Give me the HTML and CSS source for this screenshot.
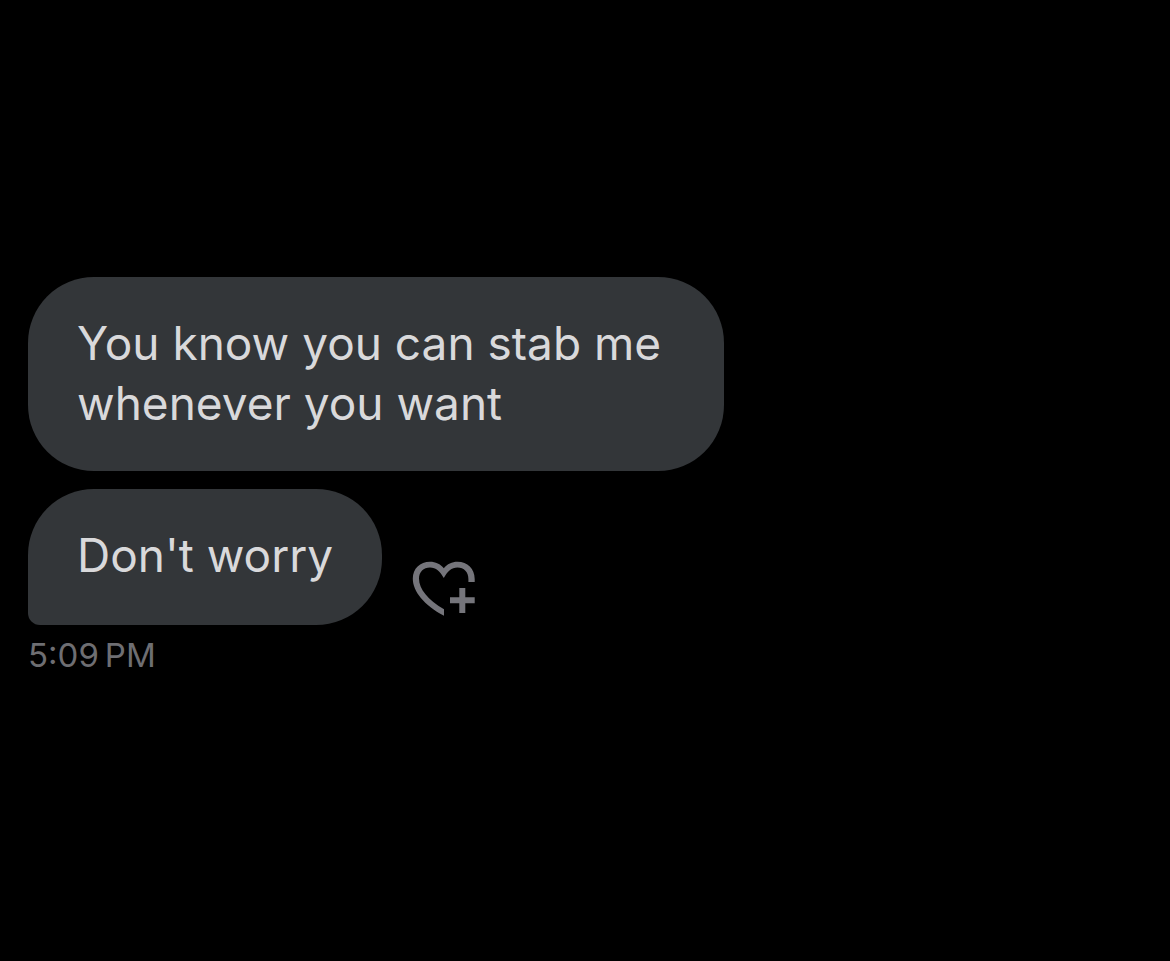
FILE: index.html
```
<!DOCTYPE html>
<html lang="en">
<head>
<meta charset="UTF-8">
<title>Messages</title>
<link rel="stylesheet" href="styles.css">
</head>
<body>
  <main class="chat">
    <div class="row">
      <p class="bubble">You know you can stab me whenever you want</p>
    </div>
    <div class="row last">
      <p class="bubble">Don't worry</p>
      <button class="react" type="button" aria-label="Add reaction">
        <svg viewBox="0 0 64 57" width="64" height="57" fill="currentColor" aria-hidden="true">
          <path d="M32 55.8C12 45 .8 31.500 .8 18.500C.8 8.500 8 1.700 18 1.700C23.500 1.700 28.500 4 31.800 8.200C35.200 4 40 1.700 45.500 1.700C55.500 1.700 62.700 8.500 62.700 19V22H56.400V19C56.400 12 52 7.500 45.500 7.500C39.500 7.500 35.500 11.500 31.800 18C28 11.500 24 7.500 18 7.500C11.500 7.500 7 12 7 18.500C7 29 16 40 32 49.300Z"/>
          <path d="M47.300 28H53.300V37.300H62.700V43.300H53.300V53H47.300V43.300H38V37.300H47.300Z"/>
        </svg>
      </button>
    </div>
    <time class="time" datetime="17:09">5:09&#8239;PM</time>
  </main>
</body>
</html>
```
FILE: styles.css
```
* {
  box-sizing: border-box;
}

body {
  margin: 0;
  background-color: #000000;
  color: #d9d9db;
  font-family: Inter, "Liberation Sans", sans-serif;
}

.chat {
  display: flex;
  flex-direction: column;
  padding: 277px 28px 28px;
}

.row {
  display: flex;
  align-items: flex-end;
  gap: 30px;
  margin-bottom: 18px;
}

.row.last {
  margin-bottom: 10px;
}

.bubble {
  max-width: 696px;
  margin: 0;
  padding: 36px 49px 38px;
  border-radius: 66px;
  background-color: #333639;
  font-size: 46px;
  line-height: 60px;
}

/* tail corner on the newest message */
.last .bubble {
  padding-bottom: 40px;
  border-bottom-left-radius: 12px;
}

.react {
  display: flex;
  padding: 0 0 8px;
  border: none;
  background: none;
  color: #75757b;
}

.time {
  color: #6e6e72;
  font-size: 33px;
  line-height: 40px;
}
```
